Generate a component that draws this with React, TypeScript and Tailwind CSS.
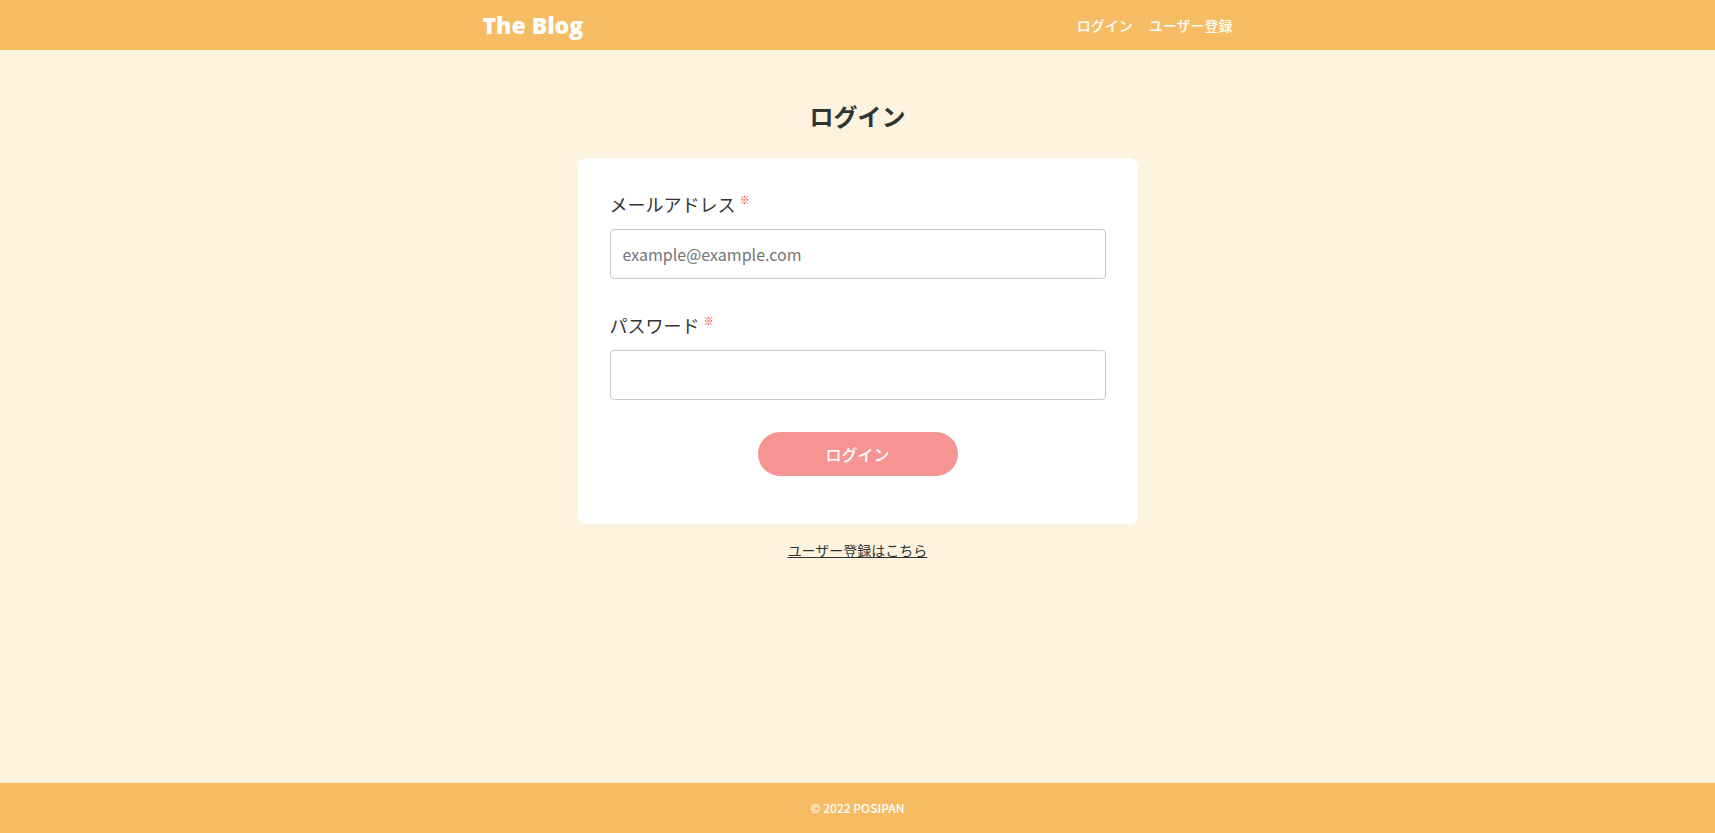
import type { InputHTMLAttributes } from "react";

type FieldProps = InputHTMLAttributes<HTMLInputElement> & { id: string; label: string };

function Field({ id, label, ...rest }: FieldProps) {
  return (
    <div className="mb-8">
      <label htmlFor={id} className="mb-3 flex h-[27px] items-center gap-1 text-lg">
        {label}
        <span className="mb-2 text-[10px] leading-none font-medium text-[#ff0000]">※</span>
      </label>
      <input
        id={id}
        required
        className="h-[50px] w-full rounded border border-[#c8c8c8] bg-white px-3 text-base shadow-none outline-none placeholder:text-[#757575]"
        {...rest}
      />
    </div>
  );
}

export default function App() {
  return (
    <div className="flex min-h-screen flex-col bg-[#fdf3df] font-['Noto_Sans_CJK_JP',sans-serif] text-[#333333]">
      <header className="bg-[#f5bc63] px-4">
        <div className="mx-auto flex h-[50px] max-w-[750px] items-center justify-between text-white">
          <a href="#top" className="font-['Open_Sans','Noto_Sans_CJK_JP',sans-serif] text-[23px] font-extrabold">The Blog</a>
          <nav className="flex gap-4 text-sm font-medium">
            <a href="#login">ログイン</a>
            <a href="#register">ユーザー登録</a>
          </nav>
        </div>
      </header>
      <main className="flex grow flex-col items-center px-4 pt-12">
        <h1 className="mb-6 text-2xl leading-9 font-bold">ログイン</h1>
        <form className="w-full max-w-[560px] rounded-lg bg-white px-8 pt-8 pb-12">
          <Field id="email" label="メールアドレス" type="email" placeholder="example@example.com" />
          <Field id="password" label="パスワード" type="password" />
          <button type="button" className="mx-auto block h-11 w-[200px] rounded-full bg-[#f69393] text-base font-medium text-white">
            ログイン
          </button>
        </form>
        <a href="#register" className="mt-4 text-sm underline">ユーザー登録はこちら</a>
      </main>
      <footer className="flex h-[50px] items-center justify-center bg-[#f5bc63] text-xs font-medium text-white">
        © 2022 POSIPAN
      </footer>
    </div>
  );
}
